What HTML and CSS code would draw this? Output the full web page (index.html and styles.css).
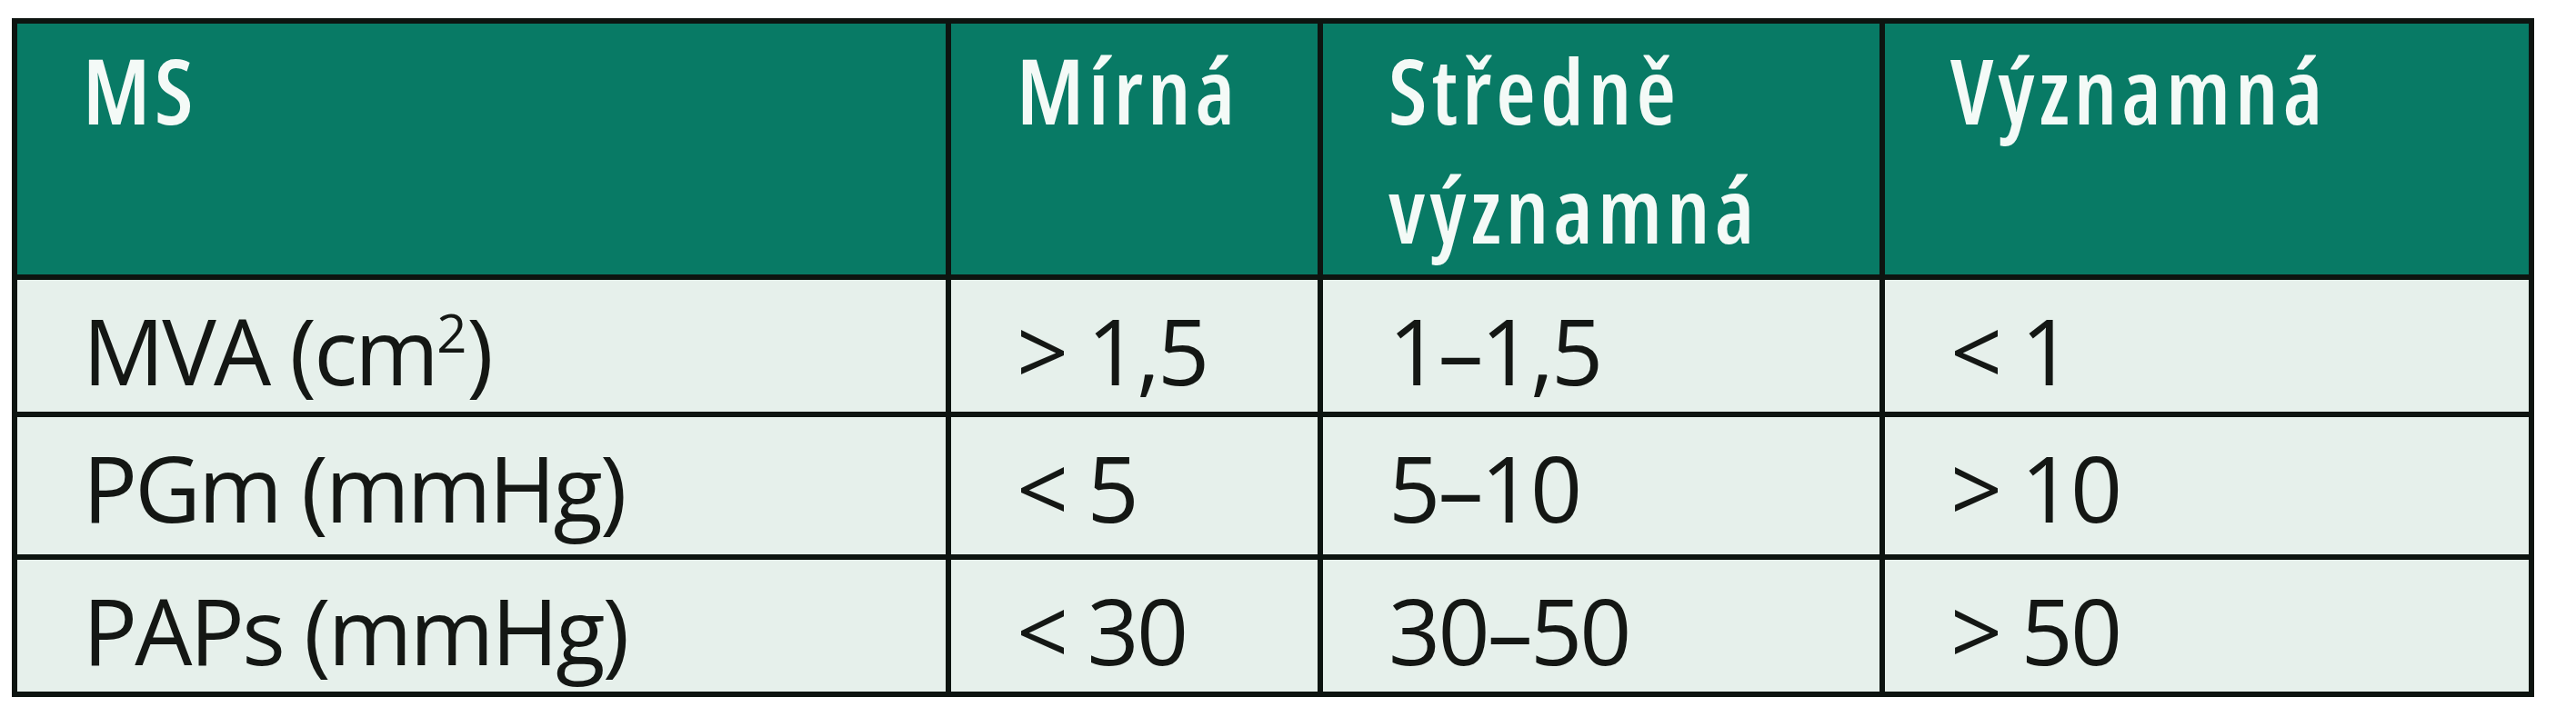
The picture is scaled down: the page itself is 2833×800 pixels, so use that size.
FILE: index.html
```html
<!DOCTYPE html>
<html lang="cs">
<head>
<meta charset="utf-8">
<title>MS</title>
<link rel="stylesheet" href="styles.css">
</head>
<body>
<table class="grade">
  <colgroup>
    <col class="c1"><col class="c2"><col class="c3"><col class="c4">
  </colgroup>
  <thead>
    <tr class="head">
      <th>MS</th>
      <th>Mírná</th>
      <th>Středně<br>významná</th>
      <th>Významná</th>
    </tr>
  </thead>
  <tbody>
    <tr class="r1">
      <td>MVA (cm<sup>2</sup>)</td>
      <td>&gt; 1,5</td>
      <td>1–1,5</td>
      <td>&lt; 1</td>
    </tr>
    <tr class="r2">
      <td>PGm (mmHg)</td>
      <td>&lt; 5</td>
      <td>5–10</td>
      <td>&gt; 10</td>
    </tr>
    <tr class="r3">
      <td>PAPs (mmHg)</td>
      <td>&lt; 30</td>
      <td>30–50</td>
      <td>&gt; 50</td>
    </tr>
  </tbody>
</table>
</body>
</html>
```
FILE: styles.css
```css
html, body {
  margin: 0;
  padding: 0;
  background: #ffffff;
}

.grade {
  margin: 20px 0 0 13px;
  border-collapse: separate;
  border-spacing: 6px;
  background: #0d1410;
  table-layout: fixed;
  width: 2774px;
  font-family: "Open Sans", "Noto Sans", sans-serif;
}

.c1 { width: 1021px; }
.c2 { width: 403px; }
.c3 { width: 612px; }
.c4 { width: 708px; }

.grade th,
.grade td {
  padding: 0 0 0 72px;
  text-align: left;
  vertical-align: top;
}

.head th {
  height: 276px;
  box-sizing: border-box;
  padding-top: 7px;
  background: #087a65;
  color: #f4faf7;
  font-size: 100px;
  line-height: 131px;
  font-weight: 600;
  font-stretch: 75%;
  letter-spacing: 5px;
}

.grade td {
  background: #e6f0eb;
  color: #141714;
  font-size: 100px;
  line-height: 136px;
  font-weight: 400;
  letter-spacing: -2.8px;
  box-sizing: border-box;
  padding-top: 9px;
}

.r1 td { height: 145px; }
.r2 td { height: 151px; }
.r3 td { height: 145px; }

.grade sup {
  font-size: 58%;
  line-height: 0;
  vertical-align: 0.62em;
  letter-spacing: 0;
}
```
